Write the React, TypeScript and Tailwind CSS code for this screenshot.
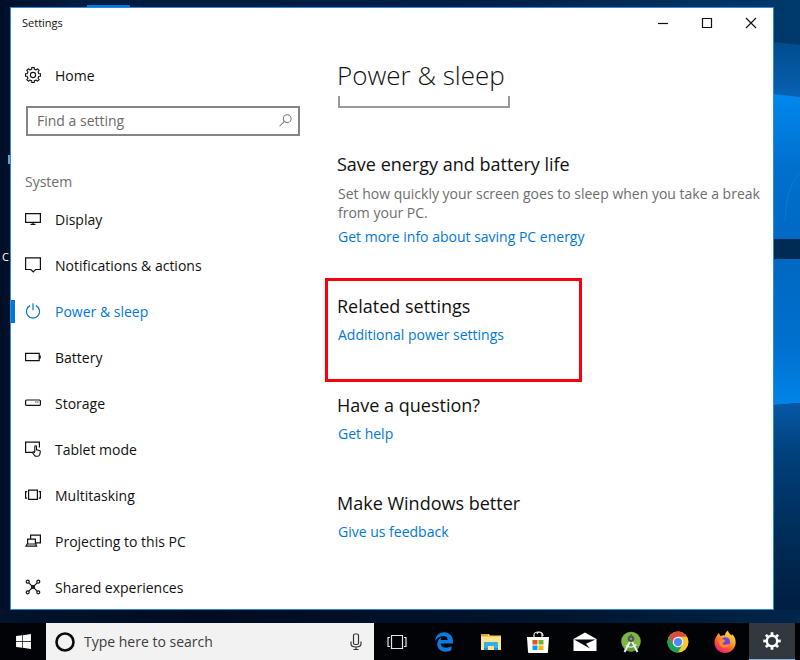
import React from "react";
import { FaEdgeLegacy, FaWindows } from "react-icons/fa6";

function gearPath(cx: number, cy: number, outer: number, inner: number, teeth: number) {
  const points: string[] = [];
  const step = (Math.PI * 2) / teeth;
  for (let i = 0; i < teeth; i++) {
    const a = i * step;
    const parts: [number, number][] = [
      [-0.2, outer],
      [0.2, outer],
      [0.27, inner],
      [0.73, inner],
    ];
    for (const [t, r] of parts) {
      const x = cx + r * Math.sin(a + t * step);
      const y = cy - r * Math.cos(a + t * step);
      points.push(`${x.toFixed(2)} ${y.toFixed(2)}`);
    }
  }
  return `M${points.join("L")}Z`;
}

function Line({ children }: { children: React.ReactNode }) {
  return (
    <svg
      viewBox="0 0 16 16"
      className="size-4 shrink-0"
      fill="none"
      stroke="currentColor"
      strokeWidth="1.2"
      aria-hidden="true"
    >
      {children}
    </svg>
  );
}

const navItems = [
  {
    label: "Display",
    icon: (
      <Line>
        <path d="M.6 2.6h14.8v8.8H.6zM8 11.4v2M5.5 13.4h5" />
      </Line>
    ),
  },
  {
    label: "Notifications & actions",
    icon: (
      <Line>
        <path d="M.6.9h14.8v11.6H10.6L8.2 15l-2.4-2.5H.6z" />
      </Line>
    ),
  },
  {
    label: "Power & sleep",
    active: true,
    icon: (
      <Line>
        <path d="M5 2.6a6.6 6.6 0 1 0 6 0M8 .3v7" />
      </Line>
    ),
  },
  {
    label: "Battery",
    icon: (
      <Line>
        <path d="M.6 4.3h13.6v7.4H.6zM15.2 6.4v3.2" />
      </Line>
    ),
  },
  {
    label: "Storage",
    icon: (
      <Line>
        <rect x=".6" y="5" width="14.8" height="5.4" rx="1" />
        <path d="M10.4 7.2h1M12.4 7.2h1" />
      </Line>
    ),
  },
  {
    label: "Tablet mode",
    icon: (
      <Line>
        <path d="M7 11.4H.6V1.2h13.8v5.2" />
        <path
          d="M9.8 11V5.6c0-1.2 1.7-1.2 1.7 0v3.2l2.8.7c.8.2 1.1.7 1 1.4l-.5 2.4c-.3 1.4-1.2 2-2.4 2h-1c-.8 0-1.4-.4-1.9-1l-2.2-3c.8-.8 1.7-.5 2.5.5"
          strokeWidth="1.1"
        />
      </Line>
    ),
  },
  {
    label: "Multitasking",
    icon: (
      <Line>
        <path d="M3.6 3.2h8.8v9.2H3.6zM2.2 4.6H.6v6.6h1.6M13.8 4.6h1.6v6.6h-1.6" />
      </Line>
    ),
  },
  {
    label: "Projecting to this PC",
    icon: (
      <Line>
        <path d="M5.6 5.8V2.2h9.8v7.6h-4.6M2.6 11V6.2h7.8V11M2.2 11h8.6l.8 2.2H1z" />
      </Line>
    ),
  },
  {
    label: "Shared experiences",
    icon: (
      <Line>
        <path d="M3.8 3.8l8.4 8.4M12.2 3.8l-8.4 8.4" />
        <circle cx="2.7" cy="2.7" r="1.5" />
        <circle cx="13.3" cy="2.7" r="1.5" />
        <circle cx="2.7" cy="13.3" r="1.5" />
        <circle cx="13.3" cy="13.3" r="1.5" />
        <circle cx="8" cy="8" r="1.5" />
      </Line>
    ),
  },
];

function Wallpaper() {
  return (
    <svg
      className="absolute inset-0 size-full"
      viewBox="0 0 800 660"
      preserveAspectRatio="none"
      aria-hidden="true"
    >
      <defs>
        <linearGradient id="night" x1="0" x2="1" y1="0" y2="0">
          <stop offset="0" stopColor="#000f28" />
          <stop offset=".1" stopColor="#001c3e" />
          <stop offset=".6" stopColor="#001f45" />
          <stop offset="1" stopColor="#003a6c" />
        </linearGradient>
        <linearGradient id="lower" x1="0" x2="0" y1="0" y2="1">
          <stop offset="0" stopColor="#0758a6" />
          <stop offset=".25" stopColor="#003f78" />
          <stop offset=".7" stopColor="#002850" />
          <stop offset="1" stopColor="#001c3c" />
        </linearGradient>
        <linearGradient id="beam" x1="0" x2="0" y1="0" y2="1">
          <stop offset="0" stopColor="#004c8c" />
          <stop offset="1" stopColor="#0862b4" />
        </linearGradient>
        <linearGradient id="paneTop" x1="0" x2="0" y1="0" y2="1">
          <stop offset="0" stopColor="#0088ee" />
          <stop offset=".5" stopColor="#0070ce" />
          <stop offset="1" stopColor="#0069c4" />
        </linearGradient>
        <linearGradient id="paneBottom" x1="0" x2="0" y1="0" y2="1">
          <stop offset="0" stopColor="#0068c0" />
          <stop offset=".6" stopColor="#0070cf" />
          <stop offset="1" stopColor="#0084e8" />
        </linearGradient>
        <linearGradient id="base" x1="0" x2="1" y1="0" y2="0">
          <stop offset="0" stopColor="#00142c" />
          <stop offset=".25" stopColor="#000c22" />
          <stop offset=".7" stopColor="#00152f" />
          <stop offset="1" stopColor="#00264c" />
        </linearGradient>
      </defs>
      <rect width="800" height="660" fill="url(#night)" />
      <rect x="87" y="5" width="43" height="4" fill="#0078d7" />
      <rect x="8" y="155" width="4" height="9" fill="#6aa0c8" />
      <path d="M774 42l26 3v53l-26-4z" fill="url(#beam)" />
      <path d="M774 94l26 3v142h-26z" fill="url(#paneTop)" />
      <path d="M785 222c1-24 5-38 15-49" stroke="#0a7ad8" fill="none" />
      <path d="M774 239h26v20h-26z" fill="#002b55" />
      <path d="M774 259h26v144l-26 2z" fill="url(#paneBottom)" />
      <path d="M774 405l26-2v220h-26z" fill="url(#lower)" />
      <rect y="610" width="800" height="50" fill="url(#base)" />
    </svg>
  );
}

function TitleBar() {
  return (
    <header className="flex h-[29px] shrink-0 items-center">
      <h1 className="flex-1 pl-[11px] text-[11px] leading-4">Settings</h1>
      <button aria-label="Minimize" className="flex h-full w-11 items-center justify-center">
        <svg width="12" height="12" stroke="currentColor" strokeWidth="1.2" aria-hidden="true">
          <path d="M1 6.5h10" />
        </svg>
      </button>
      <button aria-label="Maximize" className="flex h-full w-11 items-center justify-center">
        <svg width="12" height="12" fill="none" stroke="currentColor" strokeWidth="1.2" aria-hidden="true">
          <path d="M1.5 1.5h9v9h-9z" />
        </svg>
      </button>
      <button aria-label="Close" className="flex h-full w-11 items-center justify-center">
        <svg width="12" height="12" stroke="currentColor" strokeWidth="1.2" aria-hidden="true">
          <path d="M1 1l10 10M11 1L1 11" />
        </svg>
      </button>
    </header>
  );
}

function Sidebar() {
  return (
    <aside className="w-[314px] shrink-0 overflow-hidden">
      <a href="#home" className="mt-[23px] flex h-[30px] items-center gap-[14px] pl-[14px]">
        <Line>
          <path d={gearPath(8, 8, 7.7, 6, 8)} strokeWidth="1.1" strokeLinejoin="round" />
          <circle cx="8" cy="8" r="2.6" strokeWidth="1.1" />
        </Line>
        Home
      </a>
      <div className="mt-4 mr-[25px] ml-[15px] flex h-[30px] items-center border-2 border-[#868686] pr-1.5 pb-px pl-[9px]">
        <input
          type="search"
          aria-label="Find a setting"
          placeholder="Find a setting"
          className="min-w-0 flex-1 bg-transparent outline-none placeholder:text-[#6b6b6b]"
        />
        <svg
          viewBox="0 0 14 14"
          className="size-[13px] text-[#777777]"
          fill="none"
          stroke="currentColor"
          strokeWidth="1.1"
          aria-hidden="true"
        >
          <circle cx="8.8" cy="5" r="4.2" />
          <path d="M5.8 8L.6 13.2" />
        </svg>
      </div>
      <h2 className="mt-[34px] pl-[14px] leading-6 text-[#6e6e6e]">System</h2>
      <nav className="mt-0.5" aria-label="System">
        {navItems.map((item) => (
          <a
            key={item.label}
            href="#item"
            aria-current={item.active ? "page" : undefined}
            className={
              item.active
                ? "flex h-[46px] items-center text-[#0078d7]"
                : "flex h-[46px] items-center"
            }
          >
            <span className={item.active ? "h-[23px] w-1 bg-[#0078d7]" : "w-1"} />
            <span className="flex items-center gap-[14px] pl-2.5">
              {item.icon}
              {item.label}
            </span>
          </a>
        ))}
      </nav>
    </aside>
  );
}

function SectionTitle({ children }: { children: React.ReactNode }) {
  return <h3 className="text-[18px] leading-7">{children}</h3>;
}

function SettingLink({ children }: { children: React.ReactNode }) {
  return (
    <a href="#link" className="mt-[5px] block pl-px leading-5 text-[#0078d7]">
      {children}
    </a>
  );
}

function Content() {
  return (
    <main className="min-w-0 flex-1 pr-2">
      <h2 className="mt-[18px] pl-3 text-[26px] leading-10 font-light">Power & sleep</h2>
      <div className="mt-px ml-[13px] h-3 w-[172px] border-2 border-t-0 border-[#999999]" />
      <section className="mt-[42px] pl-3">
        <SectionTitle>Save energy and battery life</SectionTitle>
        <p className="mt-1.5 pl-px leading-[19px] text-[#6e6e6e]">
          Set how quickly your screen goes to sleep when you take a break from your PC.
        </p>
        <SettingLink>Get more info about saving PC energy</SettingLink>
      </section>
      <section className="mt-[31px] h-[104px] w-[257px] border-3 border-[#f9000c] pt-[11px] pl-[9px]">
        <SectionTitle>Related settings</SectionTitle>
        <SettingLink>Additional power settings</SettingLink>
      </section>
      <section className="mt-[9px] pl-3">
        <SectionTitle>Have a question?</SectionTitle>
        <SettingLink>Get help</SettingLink>
      </section>
      <section className="mt-[45px] pl-3">
        <SectionTitle>Make Windows better</SectionTitle>
        <SettingLink>Give us feedback</SettingLink>
      </section>
    </main>
  );
}

const pinned = [
  {
    label: "Task View",
    icon: (
      <svg width="20" height="16" fill="none" stroke="#e4e4e4" strokeWidth="1.2" aria-hidden="true">
        <path d="M4.5 1.5h11v13h-11zM3 3.5H1v9h2M17 3.5h2v9h-2" />
      </svg>
    ),
  },
  { label: "Microsoft Edge", icon: <FaEdgeLegacy className="size-5 text-[#0a7ce0]" /> },
  {
    label: "File Explorer",
    icon: (
      <svg width="22" height="20" aria-hidden="true">
        <path d="M1 2h8l1 1.5h11V18H1z" fill="#f6cf5c" />
        <path d="M1 5h20v13H1z" fill="#ffe593" />
        <path d="M1 2h7v2H1z" fill="#e6a62a" />
        <path d="M4 18v-7q0-1 1-1h12q1 0 1 1v7h-4v-4H8v4z" fill="#35aee8" />
        <path d="M4 18v-2h4v2zM14 18v-2h4v2z" fill="#1a8fd0" />
      </svg>
    ),
  },
  {
    label: "Microsoft Store",
    icon: (
      <svg width="22" height="24" aria-hidden="true">
        <path d="M7 7V5c0-4 8-4 8 0v2M10 4c1-3 6-2 6 2" fill="none" stroke="#e8e8e8" strokeWidth="1.2" />
        <path d="M0 7h22l-1 15q0 1-1 1H2q-1 0-1-1z" fill="#fff" />
        <path d="M5.5 10h5v4.500h-5z" fill="#f1511b" />
        <path d="M11.500 10h5v4.500h-5z" fill="#6cb52d" />
        <path d="M5.500 15.500h5V20h-5z" fill="#00a3ee" />
        <path d="M11.500 15.500h5V20h-5z" fill="#fbb60c" />
      </svg>
    ),
  },
  {
    label: "Mail",
    icon: (
      <svg width="24" height="20" aria-hidden="true">
        <path d="M.5 7L12 .5 23.500 7v12H.5z" fill="#fff" />
        <path d="M1 7.500h21.500L13 11.800l4 4.700z" fill="#06080c" />
      </svg>
    ),
  },
  {
    label: "Android Studio",
    icon: (
      <svg width="22" height="24" aria-hidden="true">
        <circle cx="11" cy="11.500" r="9.800" fill="#7db548" />
        <path d="M11 12l8 5.500A10 10 0 0 1 4 19z" fill="#5f9a35" />
        <path d="M10.300 11L4.500 22M11.700 11l5.800 11" stroke="#e9eef0" strokeWidth="2" />
        <path d="M6 15.500c3 2.500 7.500 2 10.500-1" fill="none" stroke="#e9eef0" strokeWidth="1.300" />
        <circle cx="11" cy="8.800" r="3.300" fill="#4b5c50" />
        <circle cx="11" cy="8.800" r="1.200" fill="#8a9f80" />
        <path d="M10.300 4h1.400v3h-1.400z" fill="#4b5c50" />
      </svg>
    ),
  },
  {
    label: "Google Chrome",
    icon: (
      <svg width="22" height="22" viewBox="0 0 48 48" aria-hidden="true">
        <circle cx="24" cy="24" r="23" fill="#fbc82f" />
        <path d="M4.100 12.500A23 23 0 0 1 43.900 12.500H24L14 29.700z" fill="#dd4b3e" />
        <path d="M4.100 12.500A23 23 0 0 0 24 47l10-17.300-10 5-10-5z" fill="#1fa05d" />
        <circle cx="24" cy="24" r="11.500" fill="#f3f3f3" />
        <circle cx="24" cy="24" r="9" fill="#4a8af4" />
      </svg>
    ),
  },
  {
    label: "Firefox",
    icon: (
      <svg width="22" height="24" aria-hidden="true">
        <defs>
          <linearGradient id="fox" x1=".8" y1="0" x2=".2" y2="1">
            <stop offset="0" stopColor="#ffe14a" />
            <stop offset=".35" stopColor="#ffab2e" />
            <stop offset=".65" stopColor="#ff5634" />
            <stop offset="1" stopColor="#e8128a" />
          </linearGradient>
        </defs>
        <path
          d="M3 5.500C3.500 4.800 4 4 4 3c1.500 1 2 2.200 2.500 3 1.500-.6 3-.8 4.500-.6C11 3.500 12 1.600 14 .5c.2 2 2 3.500 3.500 5 .4-.2.500-.8.500-1.500C21 7 22 10 21.600 13.500 21 19 16.500 23 11 23S.6 18.800.5 13C.4 10 1.500 7.500 3 5.500z"
          fill="url(#fox)"
        />
        <circle cx="11.500" cy="11.800" r="4.600" fill="#7344d8" />
        <path
          d="M4.500 10c2-1.500 4-1.500 6 0 1 .8.500 1.800-.7 2.200-1.800.6-1.300 2.300.7 2.600 2 .2 3.500-.8 5-.6-1 3-4 4-6.500 3.300S4.500 14 4.500 10z"
          fill="#ff8a26"
        />
      </svg>
    ),
  },
  {
    label: "Settings",
    active: true,
    icon: (
      <svg width="18" height="18" viewBox="0 0 18 18" aria-hidden="true">
        <path
          d={gearPath(9, 9, 8.8, 6.5, 8) + "M9 5A4 4 0 1 0 9 13A4 4 0 1 0 9 5Z"}
          fill="#fff"
          fillRule="evenodd"
        />
      </svg>
    ),
  },
];

function Taskbar() {
  return (
    <footer className="relative flex h-[37px] shrink-0 bg-[#010307] pr-[5px]">
      <button aria-label="Start" className="flex w-[46px] items-center justify-center text-white">
        <FaWindows className="size-[17px]" />
      </button>
      <div className="flex min-w-0 flex-1 items-center bg-[#f2f2f2] pr-3 pl-[9px]">
        <svg width="20" height="20" fill="none" aria-hidden="true">
          <circle cx="10" cy="10" r="8.500" stroke="#0a0a0a" strokeWidth="2.600" />
        </svg>
        <input
          type="search"
          aria-label="Type here to search"
          placeholder="Type here to search"
          className="ml-[9px] min-w-0 flex-1 bg-transparent outline-none placeholder:text-[#3c3c3c]"
        />
        <button aria-label="Voice search">
          <svg width="12" height="18" fill="none" stroke="#333333" strokeWidth="1.200" aria-hidden="true">
            <rect x="3.500" y="1" width="5" height="10.500" rx="1.500" />
            <path d="M1 8.500v2.500c0 4 10 4 10 0V8.500M6 14v2.500M3.500 16.500h5" />
          </svg>
        </button>
      </div>
      <div className="flex w-[421px] justify-between">
        {pinned.map((app) => (
          <button
            key={app.label}
            aria-label={app.label}
            className={
              app.active
                ? "flex w-[46px] items-center justify-center border-b border-[#76b9ed] bg-[#33383f]"
                : "flex w-[46px] items-center justify-center"
            }
          >
            {app.icon}
          </button>
        ))}
      </div>
    </footer>
  );
}

export default function App() {
  return (
    <div className="relative flex h-screen flex-col overflow-hidden bg-[#001c3e] font-['Open_Sans','Noto_Sans',sans-serif] text-[14px] text-[#111111]">
      <Wallpaper />
      <span className="absolute top-[249px] left-[2px] text-[11px] text-white">C</span>
      <div className="relative mt-[7px] mr-[26px] mb-[13px] ml-2.5 flex min-h-0 flex-1 flex-col overflow-hidden border border-[#2b8ae0] bg-white">
        <TitleBar />
        <div className="flex min-h-0 flex-1">
          <Sidebar />
          <Content />
        </div>
      </div>
      <Taskbar />
    </div>
  );
}
